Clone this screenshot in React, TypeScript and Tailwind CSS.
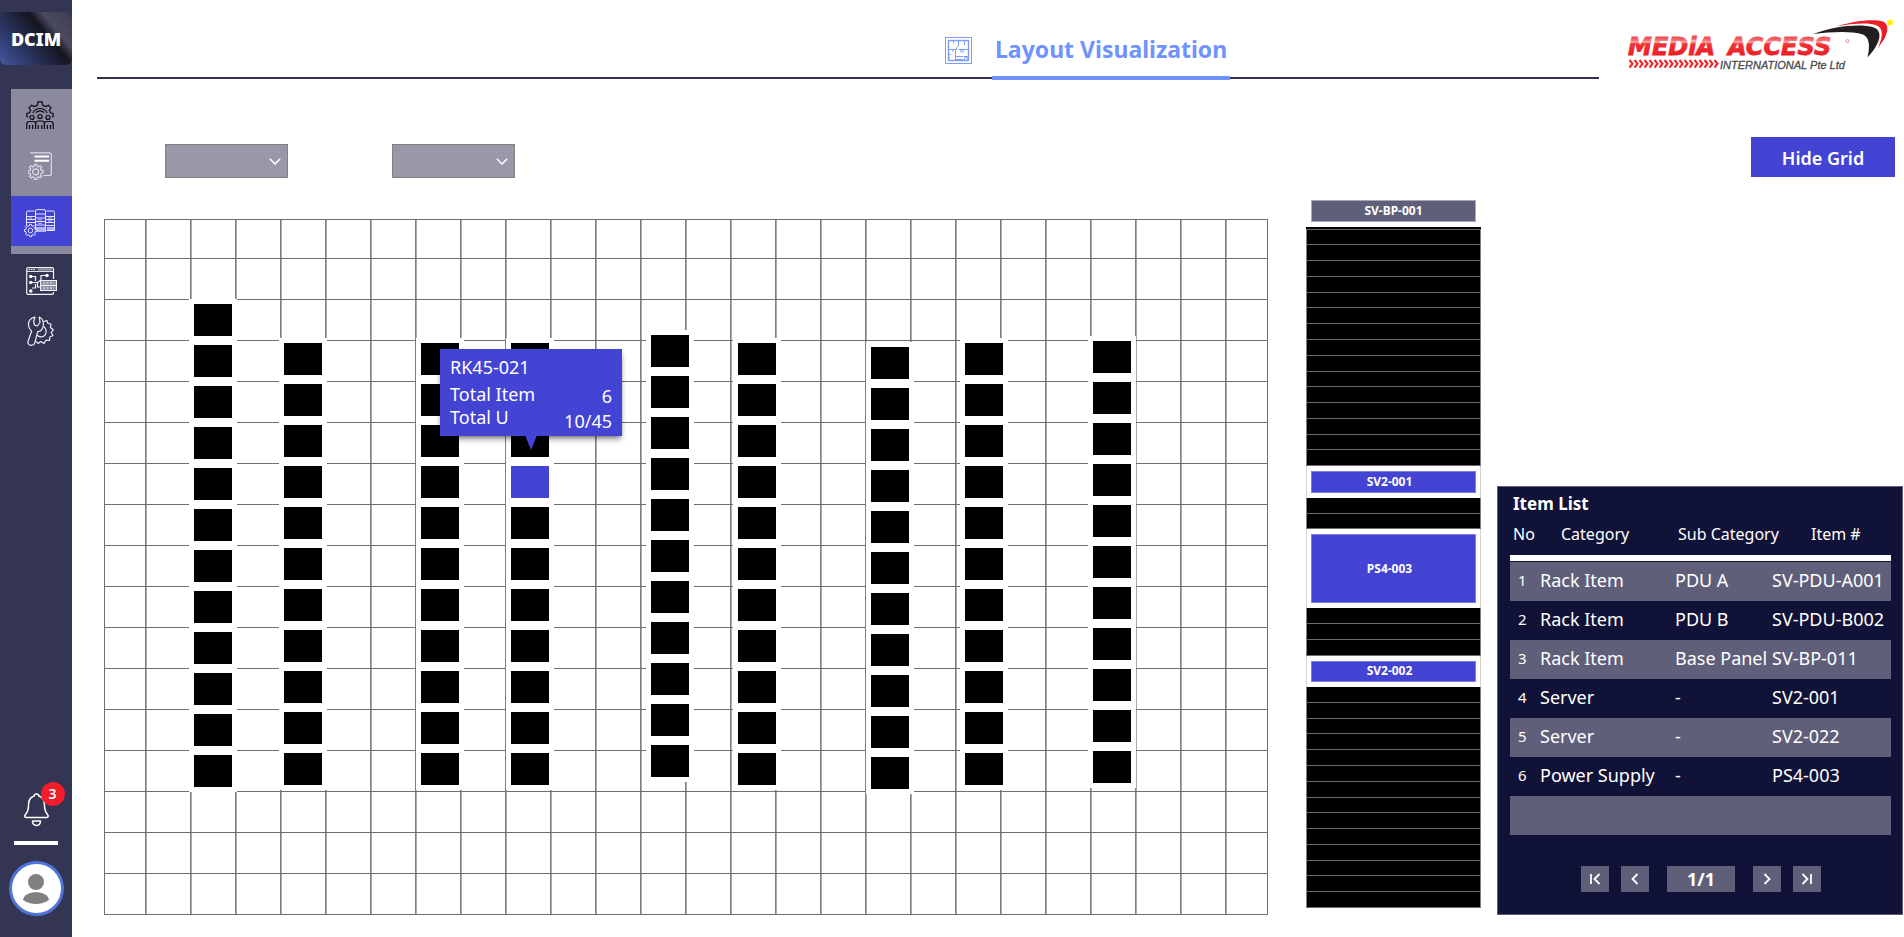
import React from "react";

const FLOOR_WIDTH = 1164;
const FLOOR_HEIGHT = 696;
const RACK_PITCH = 41;

const rackColumns = [
  { left: 85, top: 80, count: 12 },
  { left: 175, top: 119, count: 11 },
  { left: 312, top: 119, count: 11 },
  { left: 402, top: 119, count: 11, selected: 3 },
  { left: 542, top: 111, count: 11 },
  { left: 629, top: 119, count: 11 },
  { left: 762, top: 123, count: 11 },
  { left: 856, top: 119, count: 11 },
  { left: 984, top: 117, count: 11 },
];

type Slot = { label?: string; units: number; kind: "base" | "item" | "empty" };

const empties = (n: number): Slot[] => Array.from({ length: n }, () => ({ units: 1, kind: "empty" }));

const slots: Slot[] = [
  { label: "SV-BP-001", units: 2, kind: "base" },
  ...empties(15),
  { label: "SV2-001", units: 2, kind: "item" },
  ...empties(2),
  { label: "PS4-003", units: 5, kind: "item" },
  ...empties(3),
  { label: "SV2-002", units: 2, kind: "item" },
  ...empties(14),
];

const items = [
  ["1", "Rack Item", "PDU A", "SV-PDU-A001"],
  ["2", "Rack Item", "PDU B", "SV-PDU-B002"],
  ["3", "Rack Item", "Base Panel", "SV-BP-011"],
  ["4", "Server", "-", "SV2-001"],
  ["5", "Server", "-", "SV2-022"],
  ["6", "Power Supply", "-", "PS4-003"],
  ["", "", "", ""],
];

function gearPath(cx: number, cy: number, outer: number, inner: number, teeth: number) {
  const step = (Math.PI * 2) / teeth;
  const pts: string[] = [];
  for (let i = 0; i < teeth; i++) {
    const a = i * step - Math.PI / 2;
    [
      [inner, -0.3],
      [outer, -0.2],
      [outer, 0.2],
      [inner, 0.3],
    ].forEach(([r, f]) => {
      pts.push(`${(cx + r * Math.cos(a + f * step)).toFixed(2)} ${(cy + r * Math.sin(a + f * step)).toFixed(2)}`);
    });
  }
  return `M${pts.join("L")}Z`;
}

function TeamGearIcon() {
  return (
    <svg width="28" height="28" viewBox="0 0 28 28" fill="none" stroke="#0b0b12" strokeWidth="1.2">
      <path d="M2 16 L.8 15.5 V12.5 L3.6 11.8 L4.6 9.2 L3 6.8 L5.6 4.2 L8 5.6 L11.3 4.2 L12 .8 H16 L16.7 4.2 L20 5.6 L22.4 4.2 L25 6.8 L23.4 9.2 L24.4 11.8 L27.2 12.5 V15.5 L26 16" />
      <path d="M7 12 C9 6 19 6 21 12 M10 11.5 C12 9.2 16 9.2 18 11.5" />
      <circle cx="14" cy="15.5" r="2" />
      <circle cx="6" cy="16.5" r="2" />
      <circle cx="22" cy="16.5" r="2" />
      <path d="M.8 28 V23 Q.8 20.5 3.5 20.5 H8 Q9.6 20.5 9.6 23 V28 M9.6 23 Q9.8 20 12 20 H16 Q18.4 20 18.4 23 V28 M18.4 23 Q18.5 20.5 20.5 20.5 H24.5 Q27.2 20.5 27.2 23 V28 M3.6 28 V24 M6.6 28 V24 M12.3 28 V24 M15.7 28 V24 M21.4 28 V24 M24.4 28 V24" />
    </svg>
  );
}

function DocumentGearIcon() {
  return (
    <svg width="24" height="28" viewBox="0 0 24 28" fill="none" stroke="#dcdce4" strokeWidth="1.2">
      <path d="M2 .9 H21.5 Q23.3 1 23.3 3 V21.5 Q23.3 23.5 21.5 23.5 H15.5" />
      <path d="M6.5 4.6 H21 M6.5 8.8 H21" stroke="#fff" strokeWidth="2" />
      <path d={gearPath(7.6, 19.8, 7.6, 5.8, 8)} strokeLinejoin="round" />
      <circle cx="7.6" cy="19.8" r="3" />
    </svg>
  );
}

function ServersGearIcon() {
  return (
    <svg width="31" height="28" viewBox="0 0 31 28" fill="none" stroke="#e4e4ff" strokeWidth="1">
      <path d="M2.5 17 V3.5 Q2.5 2 4 2 H10.5 M11.5 22.5 V2 Q11.5 .6 13 .6 H20 Q21.5 .6 21.5 2 V22.5 Z M22.5 2 H29 Q30.5 2 30.5 3.5 V21.5 H22.5" />
      <path d="M3 7.5 H11 M3 10.5 H11 M3 13.5 H11 M12 5 H21 M12 9 H21 M12 12.5 H21 M12 16 H21 M22 7.5 H30 M22 10.5 H30 M22 13.5 H30 M22 16.5 H30" />
      <path d="M12 18 H21 V23 H12Z M23 18 H30 V21 H23Z" fill="#b3b3f2" stroke="none" />
      <path d="M5 9 H8 M14 10.8 H18 M14 14.3 H18 M24 9 H28 M24 12 H28" strokeWidth=".8" />
      <path d={gearPath(6.5, 21.5, 6.2, 4.8, 8)} fill="#4344d4" strokeLinejoin="round" />
      <circle cx="6.5" cy="21.5" r="2.3" />
    </svg>
  );
}

function NetworkPlanIcon() {
  return (
    <svg width="31" height="28" viewBox="0 0 31 28" fill="none" stroke="#f4f4fa" strokeWidth="1.2">
      <path d="M27.5 12 V2 Q27.5 .6 26 .6 H2.2 Q.7 .6 .7 2 V26 Q.7 27.4 2.2 27.4 H26 Q27.5 27.4 27.5 26 V25" />
      <path d="M1 4.4 H27" strokeWidth="1" />
      <path d="M12 2.5 H26" stroke="#9a9ab4" strokeWidth="2" />
      <path d="M2.5 2.5 H9" strokeDasharray="1.5 1" />
      <path d="M6 9.5 H9.5 V14 M6 15.5 H11 M9.5 17 V21 H6 M20 8.5 H15 V13 L11.5 15.5 V20 H14" />
      <circle cx="4.8" cy="9.5" r="1.2" fill="#fff" />
      <circle cx="4.8" cy="15.5" r="1.2" fill="#fff" />
      <circle cx="4.8" cy="24" r="1.2" fill="#fff" />
      <circle cx="21" cy="8.5" r="1.2" fill="#fff" />
      <rect x="14.5" y="13.5" width="16" height="5" fill="#8d8da6" strokeWidth="1" />
      <rect x="14.5" y="18.5" width="16" height="5" fill="#8d8da6" strokeWidth="1" />
      <path d="M17 16 H28 M17 21 H28" strokeDasharray="2 1.5" />
    </svg>
  );
}

function MaintenanceIcon() {
  return (
    <svg width="27" height="30" viewBox="0 0 27 30" fill="none" stroke="#eeeef6" strokeWidth="1.2" strokeLinejoin="round">
      <path d="M8 1 C3 2.2 1 6 1.6 10 C2 12.4 3.2 14 4.6 15 L1 25.5 C.6 27.6 2 29.2 4 29.3 C6 29.4 7.5 28.4 7.9 26.5 L10.6 15.8 C14 15 16.6 12 16.4 7.5 C16.2 4.5 14.5 2 12.2 1 L13 6.5 L10.4 10 L7.5 9.2 L6.6 5.5 Z" />
      <path d="M16.5 5.5 L20 4.7 L21 7.5 L24 8 L23.4 11.5 L26.3 13.8 L24.2 16.5 L26 19.5 L22.8 21 L22.5 24.5 L19 24.2 L17 27.4 L14 25.5 L11 27.4 L9 25.3" />
      <path d="M16.6 10.5 C20.3 13 20 20 14.8 20.8 C12.4 21 10.8 20 9.8 18.8" />
    </svg>
  );
}

function LayoutIcon() {
  return (
    <svg width="27" height="27" viewBox="0 0 27 27" fill="none" stroke="#7d9dfb" strokeWidth="1">
      <rect x=".5" y=".5" width="26" height="26" />
      <rect x="3.5" y="3.5" width="20" height="20" strokeWidth="1.4" />
      <path d="M13.5 3.5 V8.5 L11.5 10.5 V12.5 H3.5 M13.5 12.5 H23.5 M8.5 3.5 V6 M19.5 3.5 V8 M8 12.5 V15 M10.5 12 V23.5 M4 17.5 H6 M4 20 V23 M15.5 12 V14.5 M18 12.5 V15 H16 M10.5 19.5 H18 M11 22.5 H18 M18.5 19.5 H23" />
      <circle cx="21" cy="22" r="1.6" />
    </svg>
  );
}

function BellIcon() {
  return (
    <svg width="25" height="34" viewBox="0 0 25 34" fill="none" stroke="#fff" strokeWidth="1.5" strokeLinejoin="round">
      <path d="M12.5 1 C11 1 10.2 2 10.2 3 C6.5 4.2 4.6 7 4.6 11 C4.6 17 3.4 19.5 1.3 21.8 C.4 23 .8 24.6 2.4 24.6 H22.6 C24.2 24.6 24.6 23 23.7 21.8 C21.6 19.5 20.4 17 20.4 11 C20.4 7 18.5 4.2 14.8 3 C14.8 2 14 1 12.5 1 Z" />
      <path d="M8.5 28 H16.5 Q16.5 32.4 12.5 32.4 Q8.5 32.4 8.5 28 Z" />
    </svg>
  );
}

function CompanyLogo() {
  return (
    <svg width="267" height="56" viewBox="0 0 267 56" role="img" aria-label="Media Access International Pte Ltd">
      <defs>
        <linearGradient id="logoRed" gradientUnits="userSpaceOnUse" x1="0" y1="21" x2="0" y2="40">
          <stop offset="0" stopColor="#ee4a4e" />
          <stop offset=".2" stopColor="#f4777a" />
          <stop offset=".26" stopColor="#f9b4b5" />
          <stop offset=".36" stopColor="#ee3338" />
          <stop offset="1" stopColor="#ed1c24" />
        </linearGradient>
      </defs>
      <g
        fontFamily="DejaVu Sans"
        fontSize="24"
        fontWeight="700"
        fontStyle="italic"
        fill="url(#logoRed)"
        stroke="url(#logoRed)"
        strokeWidth=".8"
      >
        <text x="1" y="39">MEDiA</text>
        <text x="101" y="39">ACCESS</text>
      </g>
      <circle cx="220.5" cy="25" r="1.5" fill="none" stroke="#f08a8c" strokeWidth="1" />
      {Array.from({ length: 18 }, (_, i) => (
        <path key={i} d={`M${2.5 + i * 5} 44 l3 3.8 l-3 3.8`} fill="none" stroke="#ed2a30" strokeWidth="2.2" />
      ))}
      <text
        x="93"
        y="53"
        fontFamily="Liberation Sans"
        fontSize="11"
        fontStyle="italic"
        fill="#4a4a4c"
        stroke="#4a4a4c"
        strokeWidth=".3"
      >
        INTERNATIONAL Pte Ltd
      </text>
      <path d="M186 18 C206 10.5 232 7 247 11.5 C256 15 254 27 240.5 41.5 C243.5 29 242 21 236 18.5 C223 14.5 204 16 186 18 Z" fill="#231f20" />
      <path d="M209 10.5 C229 4.5 246 3 256 5.5 C264 9 260 22 251 31.5 C255.5 22 257 13 250 9.5 C240 6 225 8 209 10.5 Z" fill="#ed1c24" />
      <circle cx="263" cy="6.5" r="3" fill="#fff200" />
    </svg>
  );
}

function Sidebar() {
  return (
    <aside className="flex w-[72px] shrink-0 flex-col bg-[#343453]">
      <a
        href="#home"
        className="mt-3 flex h-[53px] items-center justify-center rounded-md bg-[linear-gradient(50deg,#4358a0_0%,#2c3866_28%,#15151f_62%,#4a4a60_74%,#3c3c54_100%)] text-lg font-black text-white"
      >
        DCIM
      </a>
      <nav className="mt-6 flex flex-col pl-[11px]">
        <div className="flex flex-col bg-[#8a899d] pb-2">
          <a href="#team" aria-label="Team management" className="flex h-[53px] items-start pt-3 pl-[15px]">
            <TeamGearIcon />
          </a>
          <a href="#documents" aria-label="Document settings" className="flex h-[54px] items-start pt-[10px] pl-[17px]">
            <DocumentGearIcon />
          </a>
          <a href="#layout" aria-label="Layout visualization" className="flex h-[50px] items-start bg-[#4344d4] pt-[13px] pl-[13px]">
            <ServersGearIcon />
          </a>
        </div>
        <a href="#network" aria-label="Network plan" className="flex h-[53px] items-center pl-[15px]">
          <NetworkPlanIcon />
        </a>
        <a href="#maintenance" aria-label="Maintenance" className="flex h-[47px] items-center pl-[16px]">
          <MaintenanceIcon />
        </a>
      </nav>
      <div className="mt-auto mb-[21px] flex flex-col items-center">
        <button type="button" aria-label="3 notifications" className="relative">
          <BellIcon />
          <span className="absolute -top-[11px] left-[17px] flex size-6 items-center justify-center rounded-full bg-[#f21c2b] text-sm font-semibold text-white">
            3
          </span>
        </button>
        <div className="mt-[14px] h-1 w-11 bg-white" />
        <button
          type="button"
          aria-label="Profile"
          className="mt-4 flex size-[55px] items-center justify-center rounded-full border-3 border-[#4f74d8] bg-white"
        >
          <svg width="26" height="30" viewBox="0 0 26 30" fill="#808080">
            <circle cx="13" cy="8" r="8" />
            <path d="M0 26 C1 15.5 25 15.5 26 26 C18 31.3 8 31.3 0 26Z" />
          </svg>
        </button>
      </div>
    </aside>
  );
}

function Dropdown({ label }: { label: string }) {
  return (
    <div className="relative h-[34px] w-[123px]">
      <select aria-label={label} className="size-full appearance-none border border-[#808080] bg-[#9997a8] px-2 text-white">
        <option value=""></option>
      </select>
      <svg className="pointer-events-none absolute top-[14px] right-[7px]" width="12" height="7" viewBox="0 0 12 7" fill="none" stroke="#fff" strokeWidth="1.5">
        <path d="M.8 .8 L6 6 L11.2 .8" />
      </svg>
    </div>
  );
}

function FloorPlan() {
  const verticals = Array.from({ length: 25 }, (_, i) => 41 + i * 45);
  const horizontals = Array.from({ length: 16 }, (_, i) => 39 + i * RACK_PITCH);
  return (
    <section aria-label="Floor plan" className="relative h-[696px] w-[1164px] shrink-0">
      <svg width={FLOOR_WIDTH} height={FLOOR_HEIGHT} shapeRendering="crispEdges" aria-hidden="true">
        {verticals.map((x) => (
          <g key={x}>
            <rect x={x} y="0" width="1" height={FLOOR_HEIGHT} fill="#808080" />
            <rect x={x + 1} y="0" width="1" height={FLOOR_HEIGHT} fill="#ababab" />
          </g>
        ))}
        {horizontals.map((y) => (
          <rect key={y} x="0" y={y} width={FLOOR_WIDTH} height="1" fill="#707070" />
        ))}
        <rect x=".5" y=".5" width={FLOOR_WIDTH - 1} height={FLOOR_HEIGHT - 1} fill="none" stroke="#707070" />
      </svg>
      {rackColumns.map((col) => (
        <div
          key={col.left}
          className="absolute flex flex-col gap-[9px] bg-white p-[5px]"
          style={{ left: col.left, top: col.top }}
        >
          {Array.from({ length: col.count }, (_, i) => (
            <button
              key={i}
              type="button"
              aria-label={`Rack ${i + 1}`}
              className={i === col.selected ? "h-8 w-[38px] bg-[#4344d4]" : "h-8 w-[38px] bg-black"}
            />
          ))}
        </div>
      ))}
      <div
        role="tooltip"
        className="absolute top-[130px] left-[336px] flex h-[87px] w-[182px] justify-between bg-[#4344d4] px-[10px] pt-[7px] text-lg text-white shadow-md shadow-black/40"
      >
        <div className="flex flex-col leading-[23px]">
          <span className="mb-1">RK45-021</span>
          <span>Total Item</span>
          <span>Total U</span>
        </div>
        <div className="flex flex-col pt-7 text-right leading-[25px]">
          <span>6</span>
          <span>10/45</span>
        </div>
        <svg className="absolute top-[86px] left-[85px]" width="12" height="15" viewBox="0 0 12 15" fill="#4344d4">
          <path d="M0 0 H12 L6 15 Z" />
        </svg>
      </div>
    </section>
  );
}

function SlotView({ slot }: { slot: Slot }) {
  const style = { gridRow: `span ${slot.units}` };
  if (slot.kind === "empty") {
    return <div style={style} className="border-x border-b border-x-[#808080] border-b-[#6a6a6a] bg-black" />;
  }
  if (slot.kind === "base") {
    return (
      <div style={style} className="flex flex-col bg-white">
        <button
          type="button"
          className="mx-[5px] mt-[2px] mb-[5px] flex-1 border border-[#a9a8bd] bg-[#605f79] text-xs leading-none font-bold text-white"
        >
          {slot.label}
        </button>
        <div className="h-[3px] border-b border-[#6a6a6a] bg-black" />
      </div>
    );
  }
  return (
    <div style={style} className="flex flex-col border-x border-[#d4d4d4] bg-white px-1 py-[5px]">
      <button
        type="button"
        className="flex-1 border border-[#7f80e4] bg-[#4344d4] pr-2 text-xs leading-none font-bold text-white"
      >
        {slot.label}
      </button>
    </div>
  );
}

function RackElevation() {
  return (
    <section
      aria-label="Rack elevation"
      className="ml-[38px] grid h-[710px] w-[175px] shrink-0 grid-rows-[repeat(45,minmax(0,1fr))]"
    >
      {slots.map((slot, i) => (
        <SlotView key={i} slot={slot} />
      ))}
    </section>
  );
}

function PageButton({ label, path }: { label: string; path: string }) {
  return (
    <button type="button" aria-label={label} className="flex h-[26px] w-7 items-center justify-center bg-[#605f79]">
      <svg width="12" height="12" viewBox="0 0 12 12" fill="none" stroke="#fff" strokeWidth="1.8">
        <path d={path} />
      </svg>
    </button>
  );
}

function ItemList() {
  return (
    <section className="mr-px ml-4 flex h-[429px] min-w-[400px] flex-1 flex-col self-end border border-[#5f5d78] bg-[#111237] pr-[11px] pl-3 text-white">
      <h2 className="mt-[5px] pl-[3px] text-[17px] leading-6 font-bold">Item List</h2>
      <table className="mt-1 w-full table-fixed border-collapse text-left">
        <colgroup>
          <col className="w-[30px]" />
          <col className="w-[135px]" />
          <col className="w-[97px]" />
          <col />
        </colgroup>
        <thead>
          <tr className="h-[35px] align-top text-base leading-[28px] whitespace-nowrap">
            <th scope="col" className="p-0 pl-[3px] font-normal">No</th>
            <th scope="col" className="p-0 pl-[21px] font-normal">Category</th>
            <th scope="col" className="p-0 pl-[3px] font-normal">Sub Category</th>
            <th scope="col" className="p-0 pl-[39px] font-normal">Item #</th>
          </tr>
        </thead>
        <tbody>
          <tr className="h-[7px]">
            <td colSpan={4} className="p-0 align-top">
              <div className="h-[6px] bg-white" />
            </td>
          </tr>
          {items.map((row, i) => (
            <tr key={i} className="h-[39px] text-lg leading-6 whitespace-nowrap even:bg-[#605f79]">
              <td className="p-0 pb-[3px] pl-2 text-[15px] leading-6">{row[0]}</td>
              <td className="p-0 pb-[3px]">{row[1]}</td>
              <td className="p-0 pb-[3px]">{row[2]}</td>
              <td className="p-0 pb-[3px]">{row[3]}</td>
            </tr>
          ))}
        </tbody>
      </table>
      <div className="mt-auto mb-[22px] flex justify-center gap-3 pl-px">
        <PageButton label="First page" path="M2 1 V11 M10.5 1 L5.5 6 L10.5 11" />
        <PageButton label="Previous page" path="M8.5 1 L3.5 6 L8.5 11" />
        <span className="mx-[6px] flex h-[26px] w-[68px] items-center justify-center bg-[#605f79] text-lg font-bold">1/1</span>
        <PageButton label="Next page" path="M3.5 1 L8.5 6 L3.5 11" />
        <PageButton label="Last page" path="M1.5 1 L6.5 6 L1.5 11 M10 1 V11" />
      </div>
    </section>
  );
}

export default function App() {
  return (
    <div className="flex min-h-screen bg-white font-['Noto_Sans','Open_Sans',sans-serif]">
      <Sidebar />
      <main className="flex min-w-0 flex-1 flex-col">
        <header className="flex h-20 items-start pr-[10px] pl-[25px]">
          <div className="flex h-[79px] flex-1 items-end border-b-2 border-[#2f3052] pl-[848px]">
            <div className="-mb-[3px] flex items-end">
              <span className="mr-5 mb-4">
                <LayoutIcon />
              </span>
              <h1 className="h-[47px] border-b-4 border-[#6f92ff] px-[3px] text-[23px] leading-8 font-bold text-[#6f92ff]">
                Layout Visualization
              </h1>
            </div>
          </div>
          <div className="mt-4 ml-7">
            <CompanyLogo />
          </div>
        </header>
        <div className="mt-[57px] flex h-[61px] items-start pr-[9px] pl-[93px]">
          <div className="mt-[7px] flex gap-[104px]">
            <Dropdown label="Site" />
            <Dropdown label="Room" />
          </div>
          <button type="button" className="ml-auto h-10 w-36 bg-[#4344d4] pt-[2px] text-lg font-semibold text-white">
            Hide Grid
          </button>
        </div>
        <div className="flex h-[717px] pl-8">
          <div className="self-end">
            <FloorPlan />
          </div>
          <RackElevation />
          <ItemList />
        </div>
      </main>
    </div>
  );
}
